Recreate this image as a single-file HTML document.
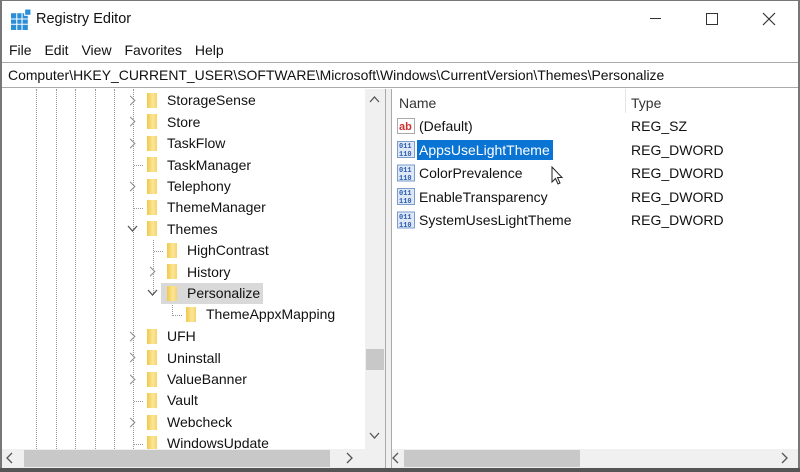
<!DOCTYPE html>
<html><head><meta charset="utf-8"><style>
*{margin:0;padding:0;box-sizing:border-box}
body{width:800px;height:472px;overflow:hidden;background:#fff;font-family:"Liberation Sans",sans-serif;font-size:14px;color:#111;position:relative}
.a{position:absolute;white-space:nowrap}
.f{position:absolute;width:10px;height:15px;background:linear-gradient(90deg,#f0c94a,#fbe79a 60%,#f4d36a)}
.dv{position:absolute;width:0;border-left:1px dotted #999}
.dh{position:absolute;height:0;width:9px;border-top:1px dotted #999}
.ch{position:absolute;width:7px;height:7px;border-right:1.4px solid #8a8a8a;border-top:1.4px solid #8a8a8a;transform:rotate(45deg);background:#fff}
</style></head><body>
<div class="a" style="left:0;top:0;width:2px;height:472px;background:#777"></div>
<div class="a" style="left:798px;top:0;width:2px;height:472px;background:#777"></div>
<div class="a" style="left:0;top:0;width:800px;height:1px;background:#777"></div>
<div class="a" style="left:0;top:468px;width:800px;height:4px;background:#555"></div>
<svg class="a" style="left:11px;top:9px" width="21" height="21" viewBox="0 0 20 20"><rect x="0" y="4" width="16" height="16" fill="#2a8fd6"/><g stroke="#fff" stroke-width="1"><line x1="5.5" y1="4" x2="5.5" y2="20"/><line x1="10.5" y1="4" x2="10.5" y2="20"/><line x1="0" y1="9.5" x2="16" y2="9.5"/><line x1="0" y1="14.5" x2="16" y2="14.5"/></g><rect x="13" y="0" width="6" height="6" fill="#2a8fd6" stroke="#fff"/></svg>
<div class="a" style="left:36px;top:11px;font-size:14.5px">Registry Editor</div>
<div class="a" style="left:650px;top:18px;width:11px;height:1px;background:#333"></div>
<div class="a" style="left:706px;top:13px;width:12px;height:12px;border:1px solid #333"></div>
<svg class="a" style="left:762px;top:12px" width="14" height="14"><path d="M1 1L13 13M13 1L1 13" stroke="#333" stroke-width="1.2"/></svg>
<div class="a" style="left:9px;top:42px;font-size:14px;word-spacing:9px">File Edit View Favorites Help</div>
<div class="a" style="left:2px;top:62px;width:796px;height:26px;border-top:1px solid #aaa;border-bottom:1px solid #aaa"></div>
<div class="a" style="left:8px;top:67px;font-size:13.95px">Computer\HKEY_CURRENT_USER\SOFTWARE\Microsoft\Windows\CurrentVersion\Themes\Personalize</div>
<div class="a" style="left:385px;top:89px;width:7px;height:379px;background:#f0f0f0;border-left:1px solid #aaa;border-right:1px solid #aaa"></div>
<div class="dv" style="left:36px;top:89px;height:360px"></div>
<div class="dv" style="left:56px;top:89px;height:360px"></div>
<div class="dv" style="left:75px;top:89px;height:360px"></div>
<div class="dv" style="left:95px;top:89px;height:360px"></div>
<div class="dv" style="left:114px;top:89px;height:360px"></div>
<div class="dv" style="left:133px;top:89px;height:360px"></div>
<div class="dv" style="left:153px;top:240px;height:55px"></div>
<div class="dv" style="left:172px;top:302px;height:14px"></div>
<div class="ch" style="left:127px;top:97px"></div><div class="f" style="left:147px;top:93px"></div><div class="a" style="left:167px;top:92px">StorageSense</div>
<div class="ch" style="left:127px;top:118px"></div><div class="f" style="left:147px;top:114px"></div><div class="a" style="left:167px;top:114px">Store</div>
<div class="ch" style="left:127px;top:140px"></div><div class="f" style="left:147px;top:136px"></div><div class="a" style="left:167px;top:135px">TaskFlow</div>
<div class="dh" style="left:134px;top:165px"></div><div class="f" style="left:147px;top:157px"></div><div class="a" style="left:167px;top:157px">TaskManager</div>
<div class="ch" style="left:127px;top:183px"></div><div class="f" style="left:147px;top:179px"></div><div class="a" style="left:167px;top:178px">Telephony</div>
<div class="dh" style="left:134px;top:208px"></div><div class="f" style="left:147px;top:200px"></div><div class="a" style="left:167px;top:199px">ThemeManager</div>
<svg class="a" style="left:127px;top:225px" width="11" height="8"><path d="M1 1L5.5 6L10 1" stroke="#555" fill="none" stroke-width="1.3"/></svg><div class="f" style="left:147px;top:221px"></div><div class="a" style="left:167px;top:221px">Themes</div>
<div class="dh" style="left:154px;top:251px"></div><div class="f" style="left:167px;top:243px"></div><div class="a" style="left:187px;top:242px">HighContrast</div>
<div class="ch" style="left:147px;top:268px"></div><div class="f" style="left:167px;top:264px"></div><div class="a" style="left:187px;top:264px">History</div>
<div class="a" style="left:161px;top:283px;width:102px;height:21px;background:#d9d9d9"></div>
<svg class="a" style="left:147px;top:289px" width="11" height="8"><path d="M1 1L5.5 6L10 1" stroke="#555" fill="none" stroke-width="1.3"/></svg><div class="f" style="left:167px;top:286px"></div><div class="a" style="left:187px;top:285px">Personalize</div>
<div class="dh" style="left:173px;top:315px"></div><div class="f" style="left:186px;top:307px"></div><div class="a" style="left:206px;top:306px">ThemeAppxMapping</div>
<div class="ch" style="left:127px;top:333px"></div><div class="f" style="left:147px;top:329px"></div><div class="a" style="left:167px;top:328px">UFH</div>
<div class="ch" style="left:127px;top:354px"></div><div class="f" style="left:147px;top:350px"></div><div class="a" style="left:167px;top:350px">Uninstall</div>
<div class="ch" style="left:127px;top:376px"></div><div class="f" style="left:147px;top:372px"></div><div class="a" style="left:167px;top:371px">ValueBanner</div>
<div class="dh" style="left:134px;top:401px"></div><div class="f" style="left:147px;top:393px"></div><div class="a" style="left:167px;top:392px">Vault</div>
<div class="ch" style="left:127px;top:419px"></div><div class="f" style="left:147px;top:415px"></div><div class="a" style="left:167px;top:414px">Webcheck</div>
<div class="dh" style="left:134px;top:444px"></div><div class="f" style="left:147px;top:436px"></div><div class="a" style="left:167px;top:435px">WindowsUpdate</div>
<div class="a" style="left:365px;top:89px;width:20px;height:360px;background:#f0f0f0"></div>
<div class="a" style="left:366px;top:349px;width:18px;height:21px;background:#c8c8c8"></div>
<svg class="a" style="left:369px;top:96px" width="11" height="8"><path d="M1 6L5.5 1L10 6" stroke="#555" fill="none" stroke-width="1.3"/></svg>
<svg class="a" style="left:369px;top:432px" width="11" height="8"><path d="M1 1L5.5 6L10 1" stroke="#555" fill="none" stroke-width="1.3"/></svg>
<div class="a" style="left:2px;top:449px;width:383px;height:19px;background:#f0f0f0"></div>
<div class="a" style="left:24px;top:450px;width:306px;height:17px;background:#c8c8c8"></div>
<svg class="a" style="left:6px;top:452px" width="8" height="12"><path d="M6 1L1 6L6 11" stroke="#555" fill="none" stroke-width="1.3"/></svg>
<svg class="a" style="left:346px;top:452px" width="8" height="12"><path d="M1 1L6 6L1 11" stroke="#555" fill="none" stroke-width="1.3"/></svg>
<div class="a" style="left:625px;top:89px;width:1px;height:24px;background:#e5e5e5"></div>
<div class="a" style="left:399px;top:95px;color:#333">Name</div>
<div class="a" style="left:631px;top:95px;color:#333">Type</div>
<svg class="a" style="left:397px;top:118px" width="18" height="16"><rect x="0.5" y="0.5" width="17" height="15" fill="#fff" stroke="#aaa"/><text x="2" y="12" font-family="Liberation Sans" font-size="11" font-weight="bold" fill="#c33">ab</text></svg>
<div class="a" style="left:419px;top:118px">(Default)</div><div class="a" style="left:631px;top:118px">REG_SZ</div>
<div class="a" style="left:417px;top:140px;width:136px;height:20px;background:#0a74d4"></div>
<div class="a" style="left:419px;top:142px;color:#fff">AppsUseLightTheme</div><div class="a" style="left:631px;top:142px">REG_DWORD</div>
<div class="a" style="left:419px;top:165px">ColorPrevalence</div><div class="a" style="left:631px;top:165px">REG_DWORD</div>
<div class="a" style="left:419px;top:189px">EnableTransparency</div><div class="a" style="left:631px;top:189px">REG_DWORD</div>
<div class="a" style="left:419px;top:212px">SystemUsesLightTheme</div><div class="a" style="left:631px;top:212px">REG_DWORD</div>
<svg class="a" style="left:397px;top:141px" width="18" height="90">
<g font-family="Liberation Mono" font-size="7" font-weight="bold" fill="#2a5db0">
<rect x="0.5" y="0.5" width="17" height="16" fill="#dfe8f5" stroke="#7a9ccc"/><text x="2" y="7">011</text><text x="2" y="15">110</text>
<rect x="0.5" y="24" width="17" height="16" fill="#dfe8f5" stroke="#7a9ccc"/><text x="2" y="31">011</text><text x="2" y="39">110</text>
<rect x="0.5" y="47.5" width="17" height="16" fill="#dfe8f5" stroke="#7a9ccc"/><text x="2" y="54">011</text><text x="2" y="62">110</text>
<rect x="0.5" y="71" width="17" height="16" fill="#dfe8f5" stroke="#7a9ccc"/><text x="2" y="78">011</text><text x="2" y="86">110</text>
</g></svg>
<svg class="a" style="left:551px;top:166px" width="14" height="20"><path d="M1 1L1 16L4.5 12.5L7 18L9 17L6.5 11.5L11 11.5Z" fill="#fff" stroke="#222"/></svg>
<div class="a" style="left:392px;top:449px;width:406px;height:19px;background:#f0f0f0"></div>
<div class="a" style="left:404px;top:450px;width:176px;height:17px;background:#c8c8c8"></div>
<svg class="a" style="left:392px;top:452px" width="8" height="12"><path d="M6 1L1 6L6 11" stroke="#555" fill="none" stroke-width="1.3"/></svg>
<svg class="a" style="left:781px;top:452px" width="8" height="12"><path d="M1 1L6 6L1 11" stroke="#555" fill="none" stroke-width="1.3"/></svg>
</body></html>
